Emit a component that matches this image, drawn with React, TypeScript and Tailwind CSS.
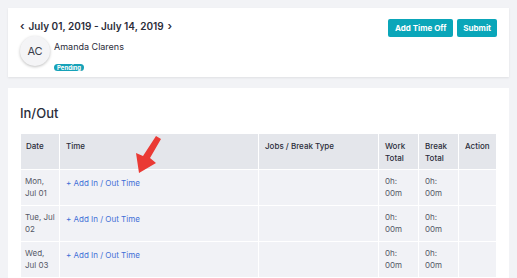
import React from "react";

const rows = [
  { day: "Mon,", date: "Jul 01" },
  { day: "Tue, Jul", date: "02" },
  { day: "Wed,", date: "Jul 03" },
];

export default function App() {
  return (
    <div
      className="h-[278px] overflow-hidden bg-[#f2f3f6] p-2 text-[#2b2d3a]"
      style={{ fontFamily: "Inter, 'Open Sans', sans-serif" }}
    >
      {/* header card */}
      <div className="flex h-[69px] justify-between bg-white px-3 pt-[11px] shadow-[0_1px_2px_rgba(0,0,0,0.08)]">
        <div>
          <div className="flex items-center gap-1 text-[10px] font-semibold leading-[14px]">
            <span className="text-[11px]">&lsaquo;</span>
            <span>July 01, 2019 - July 14, 2019</span>
            <span className="text-[11px]">&rsaquo;</span>
          </div>
          <div className="mt-[3px] flex items-start gap-[4px]">
            <div className="flex h-[30px] w-[30px] items-center justify-center rounded-full bg-[#f4f4f6] text-[11px] text-[#3b3d4a] shadow-[0_1px_3px_rgba(0,0,0,0.25)]">
              AC
            </div>
            <div className="pt-[5px]">
              <div className="text-[9px] leading-[11px] text-[#2b2d3a]">Amanda Clarens</div>
              <span className="mt-[2px] inline-block rounded-full bg-[#17a2b8] px-[3px] text-[6px] font-bold leading-[7px] text-white">
                Pending
              </span>
            </div>
          </div>
        </div>
        <div className="flex gap-1">
          <button className="h-[18px] rounded-[2px] bg-[#0aa6b9] px-[7px] text-[8px] font-bold text-white">
            Add Time Off
          </button>
          <button className="h-[18px] rounded-[2px] bg-[#0aa6b9] px-[6px] text-[8px] font-bold text-white">
            Submit
          </button>
        </div>
      </div>

      {/* in/out card */}
      <div className="mt-[11px] bg-white px-3 pt-[17px] pb-2">
        <h2 className="text-[13px] font-medium leading-[16px]">In/Out</h2>
        <div className="relative mt-[12px]">
          <table className="w-full border-collapse text-left text-[8px] leading-[12px]">
            <colgroup>
              <col className="w-[39px]" />
              <col className="w-[199px]" />
              <col className="w-[120px]" />
              <col className="w-[40px]" />
              <col className="w-[40px]" />
              <col />
            </colgroup>
            <thead>
              <tr className="h-[36px] bg-[#e4e6eb] align-top text-[#2b2d3a]">
                <th className="border border-white px-[5px] pt-[6px] font-medium">Date</th>
                <th className="border border-white px-[6px] pt-[6px] font-medium">Time</th>
                <th className="border border-white px-[6px] pt-[6px] font-medium">Jobs / Break Type</th>
                <th className="border border-white px-[6px] pt-[6px] font-medium">Work Total</th>
                <th className="border border-white px-[6px] pt-[6px] font-medium">Break Total</th>
                <th className="border border-white px-[6px] pt-[6px] font-medium">Action</th>
              </tr>
            </thead>
            <tbody>
              {rows.map((r) => (
                <tr key={r.date} className="h-[36px] bg-[#f1f2f6] align-top text-[#555866]">
                  <td className="whitespace-nowrap border border-white px-[4px] pt-[5px]">
                    {r.day}
                    <br />
                    {r.date}
                  </td>
                  <td className="border border-white px-[6px] pt-[7px]">
                    <span className="text-[#3f6fd6]">+ Add In / Out Time</span>
                  </td>
                  <td className="border border-white"></td>
                  <td className="border border-white px-[6px] pt-[5px]">
                    0h:
                    <br />
                    00m
                  </td>
                  <td className="border border-white px-[6px] pt-[5px]">
                    0h:
                    <br />
                    00m
                  </td>
                  <td className="border border-white"></td>
                </tr>
              ))}
            </tbody>
          </table>
          {/* red pointer arrow */}
          <svg
            className="absolute left-[115px] top-[3px]"
            width="28"
            height="38"
            viewBox="0 0 28 38"
          >
            <polygon
              points="21,0 26,3 15,22 21,27 4,37 1,17 8,20"
              fill="#ea3a34"
            />
          </svg>
        </div>
      </div>
    </div>
  );
}
